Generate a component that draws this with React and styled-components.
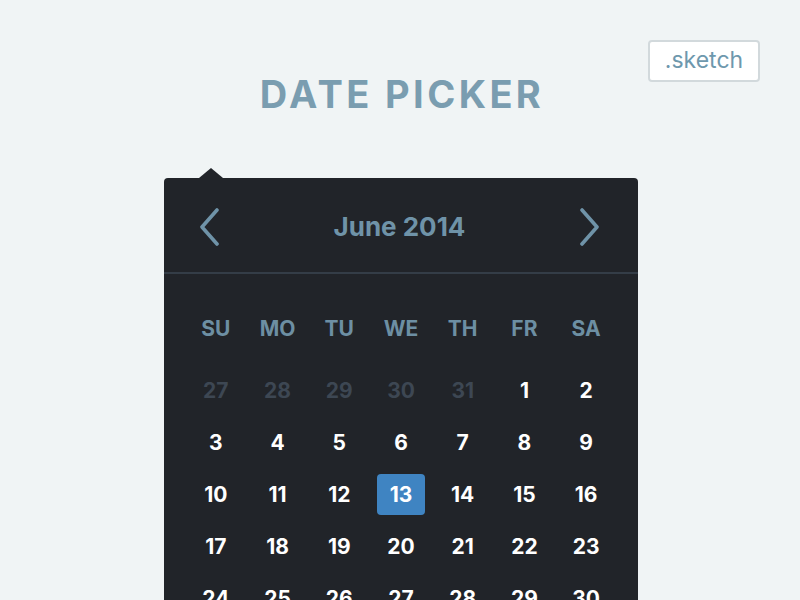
import React from 'react';
import styled, {createGlobalStyle} from 'styled-components';

const GlobalStyle = createGlobalStyle`
    html, body {
        margin: 0;
        background: #f0f4f5;
        font-family: Inter, Lato, sans-serif;
        overflow: hidden;
    }
`;

const weekdays = ['SU', 'MO', 'TU', 'WE', 'TH', 'FR', 'SA'];

const buildDays = () => {
    const days = [27, 28, 29, 30, 31].map(n => ({n, muted: true}));
    for (let i = 1; i <= 30; i++) days.push({n: i, muted: false});
    return days;
};

const Chevron = ({flip}) => (
    <svg width="22" height="38" viewBox="0 0 22 38" style={{transform: flip ? 'scaleX(-1)' : 'none'}}>
        <path d="M19 2 L4 19 L19 36" fill="none" stroke="#6f93a8" strokeWidth="3.6"
              strokeLinecap="round" strokeLinejoin="round"/>
    </svg>
);

const App = () => {
    const days = buildDays();
    return <Page>
        <GlobalStyle/>
        <Header>
            <Title>DATE PICKER</Title>
            <SketchButton>.sketch</SketchButton>
        </Header>
        <Calendar>
            <MonthBar>
                <NavButton><Chevron/></NavButton>
                <Month>June 2014</Month>
                <NavButton><Chevron flip/></NavButton>
            </MonthBar>
            <Body>
                <Grid>
                    {weekdays.map(d => <Weekday key={d}>{d}</Weekday>)}
                </Grid>
                <Grid>
                    {days.map((d, i) =>
                        <Day key={i} $muted={d.muted}>
                            <DayLabel $selected={!d.muted && d.n === 13}>{d.n}</DayLabel>
                        </Day>
                    )}
                </Grid>
            </Body>
        </Calendar>
    </Page>
};

export default App;

const Page = styled.div`
    width: 800px;
    height: 600px;
    overflow: hidden;
`;

const Header = styled.div`
    display: grid;
    grid-template-columns: 1fr auto 1fr;
    padding: 40px 40px 0 40px;
    height: 128px;
    box-sizing: border-box;
`;

const Title = styled.h1`
    grid-column: 2;
    margin: 34px 0 0 0;
    font-size: 38px;
    line-height: 40px;
    font-weight: 700;
    letter-spacing: 3.4px;
    color: #7a9db0;
    padding-left: 4px;
`;

const SketchButton = styled.div`
    grid-column: 3;
    justify-self: end;
    align-self: start;
    width: 112px;
    height: 42px;
    box-sizing: border-box;
    border: 2px solid #d2d9dc;
    border-radius: 4px;
    background: #fff;
    color: #6e98ad;
    font-size: 23px;
    display: flex;
    align-items: center;
    justify-content: center;
    padding-bottom: 2px;
`;

const Calendar = styled.div`
    position: relative;
    width: 474px;
    margin: 50px 0 0 164px;
    background: #212429;
    border-radius: 4px;

    &::before {
        content: '';
        position: absolute;
        top: -10px;
        left: 35px;
        border-left: 12px solid transparent;
        border-right: 12px solid transparent;
        border-bottom: 10px solid #212429;
    }
`;

const MonthBar = styled.div`
    display: flex;
    align-items: center;
    justify-content: space-between;
    height: 94px;
    padding: 0 37px 0 34px;
    border-bottom: 2px solid #343d47;
`;

const NavButton = styled.div`
    display: flex;
    padding-top: 4px;
`;

const Month = styled.div`
    color: #6f93a8;
    font-size: 26px;
    font-weight: 700;
    padding-top: 3px;
`;

const Body = styled.div`
    padding: 28px 21px 0 21px;
    display: flex;
    flex-direction: column;
    gap: 10px;
`;

const Grid = styled.div`
    display: grid;
    grid-template-columns: repeat(7, 1fr);
    grid-auto-rows: 52px;
`;

const Weekday = styled.div`
    display: flex;
    align-items: center;
    justify-content: center;
    color: #6d8fa3;
    font-size: 21px;
    font-weight: 700;
`;

const Day = styled.div`
    display: flex;
    align-items: center;
    justify-content: center;
    color: ${p => p.$muted ? '#3d4753' : '#ffffff'};
    font-size: 21px;
    font-weight: 700;
`;

const DayLabel = styled.span`
    display: flex;
    align-items: center;
    justify-content: center;
    width: 48px;
    height: 41px;
    border-radius: 4px;
    background: ${p => p.$selected ? '#3f84c2' : 'transparent'};
`;
